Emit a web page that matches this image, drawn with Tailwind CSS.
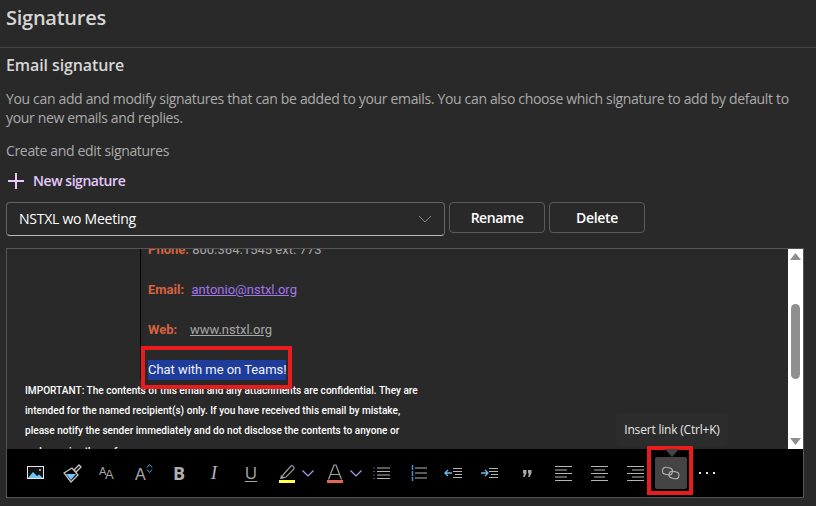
<!DOCTYPE html>
<html lang="en">
<head>
    <meta charset="UTF-8">
    <title>Signatures</title>
    <script src="https://cdn.jsdelivr.net/npm/@tailwindcss/browser@4"></script>
</head>
<body class="bg-[#292929] w-[816px] h-[506px] overflow-hidden font-['Open_Sans','Noto_Sans',sans-serif] relative">

    <!-- Header -->
    <div class="h-[48px] border-b border-[#444] pl-[6px] pt-[3px]">
        <h1 class="text-[20px] leading-[30px] font-semibold text-[#d6d6d6] tracking-[-0.25px]">Signatures</h1>
    </div>

    <div class="px-[6px]">
        <h2 class="mt-[6px] text-[16px] leading-[22px] font-semibold text-[#d6d6d6] tracking-[-0.1px]">Email signature</h2>
        <p class="mt-[13px] w-[800px] text-[14px] leading-[19px] text-[#ababab] tracking-[-0.34px]">You can add and modify signatures that can be added to your emails. You can also choose which signature to add by default to your new emails and replies.</p>
        <p class="mt-[14px] text-[14px] leading-[19px] text-[#ababab] tracking-[-0.34px]">Create and edit signatures</p>

        <!-- New signature -->
        <div class="mt-[11px] h-[20px] flex items-center gap-[9px] pl-[2px]">
            <svg width="16" height="16" viewBox="0 0 16 16"><path d="M8 0v16M0 8h16" stroke="#e9c8fb" stroke-width="2"/></svg>
            <span class="-mt-[1px] text-[14px] font-semibold text-[#e3c9fb] tracking-[-0.45px]">New signature</span>
        </div>

        <!-- Signature picker -->
        <div class="mt-[11px] flex items-start gap-[4px]">
            <div class="w-[439px] h-[34px] rounded-[4px] border border-[#666] border-b-[#bbb] flex items-center justify-between pl-[12px] pr-[12px]">
                <span class="-mt-[1px] text-[14px] text-white tracking-[-0.25px]">NSTXL wo Meeting</span>
                <svg width="14" height="8" viewBox="0 0 14 8"><path d="M1 1l6 6 6-6" stroke="#8a8a8a" fill="none"/></svg>
            </div>
            <button class="w-[96px] h-[31px] rounded-[4px] border border-[#5a5a5a] text-[14px] font-semibold text-white tracking-[-0.45px]">Rename</button>
            <button class="w-[96px] h-[31px] rounded-[4px] border border-[#5a5a5a] text-[14px] font-semibold text-white tracking-[-0.3px]">Delete</button>
        </div>

        <!-- Editor -->
        <div class="mt-[12px] w-[798px] h-[250px] border border-[#555] flex flex-col">
            <div class="h-[200px] flex overflow-hidden">
                <div class="flex-1 overflow-hidden font-['Roboto',sans-serif]">
                    <div class="h-[131px] ml-[133px] border-l border-black overflow-hidden pl-[7px] text-[13px] leading-[40px] text-[#a8a8a8]">
                        <div class="-mt-[19px]"><b class="text-[#d9623f]">Phone:</b> 800.364.1545 ext. 773</div>
                        <div><b class="text-[#d9623f]">Email:</b> &nbsp;<span class="ml-[1px] underline text-[#a374f0]">antonio@nstxl.org</span></div>
                        <div><b class="text-[#d9623f]">Web:</b> &nbsp;&nbsp;<span class="ml-[3px] underline">www.nstxl.org</span></div>
                        <div class="h-[20px] mt-[10px] w-[138px] bg-[#1e3c9c] text-[#f2f2f2] leading-[20px] tracking-[-0.04px] whitespace-nowrap">Chat with me on Teams!</div>
                    </div>
                    <div class="pt-[1px] pl-[18px] text-[10.1px] leading-[20px] font-medium text-white whitespace-nowrap">
                        <div>IMPORTANT: The contents of this email and any attachments are confidential. They are</div>
                        <div>intended for the named recipient(s) only. If you have received this email by mistake,</div>
                        <div>please notify the sender immediately and do not disclose the contents to anyone or</div>
                        <div class="mt-[1px]">make copies thereof.</div>
                    </div>
                </div>
                <!-- Scrollbar -->
                <div class="w-[15px] bg-white flex flex-col items-center">
                    <svg class="mt-[4px]" width="11" height="8" viewBox="0 0 11 8"><path d="M5.500 0l5.500 7H0z" fill="#8f8f8f"/></svg>
                    <div class="mt-[43px] w-[9px] h-[75px] rounded-[5px] bg-[#8f8f8f]"></div>
                    <svg class="mt-[58px]" width="11" height="8" viewBox="0 0 11 8"><path d="M0 1h11L5.500 8z" fill="#8f8f8f"/></svg>
                </div>
            </div>

            <!-- Toolbar -->
            <div class="h-[48px] bg-black flex items-center pl-[18px]">
                <svg width="20" height="20" viewBox="0 0 20 20"><rect x="2.500" y="3.500" width="16" height="12" fill="#111" stroke="#e6e6e6"/><path d="M3 15l5-6 4 4 2-1.500 4 3.500z" fill="#72c6f5"/><circle cx="15" cy="7" r="1" fill="#ccc"/></svg>
                <svg class="ml-[17px]" width="20" height="20" viewBox="0 0 20 20"><path d="M14 9l-2-2 5-5 2 2zM2 10l8-5 6 7-7 7z" fill="none" stroke="#c8c8c8" stroke-width="1.300"/><path d="M4 11h10l-5 6z" fill="#72c6f5"/></svg>
                <svg class="ml-[15px]" width="20" height="20" viewBox="0 0 20 20"><text x="2" y="12" font-family="Liberation Sans" font-size="11" fill="#a8a8a8">A</text><text x="8" y="16" font-family="Liberation Sans" font-size="13" fill="#a8a8a8">A</text></svg>
                <svg class="ml-[18px]" width="20" height="20" viewBox="0 0 20 20"><text x="0" y="17" font-family="Liberation Sans" font-size="16" fill="#a8a8a8">A</text><path d="M12 5l2.500-3L17 5M12 7l2.500 3L17 7" transform="translate(0 -.5)" stroke="#4fa6dc" fill="none"/></svg>
                <span class="ml-[14px] w-[20px] text-center text-[18px] leading-[20px] font-bold text-[#b0b0b0] font-['Open_Sans',sans-serif]">B</span>
                <span class="ml-[15px] w-[20px] text-center text-[19px] leading-[20px] italic text-[#b0b0b0] font-['Liberation_Serif',serif]">I</span>
                <span class="ml-[17px] w-[20px] text-center text-[17px] leading-[18px] underline underline-offset-2 text-[#a8a8a8] font-['Open_Sans',sans-serif]">U</span>
                <svg class="ml-[15px]" width="20" height="20" viewBox="0 0 20 20"><path d="M7 12l8-9c1-1 4 1 3 3l-8 8-4 1z" fill="none" stroke="#9a9a9a" stroke-width="1.200"/><path d="M5 12l4 3-5 1z" fill="#9a9a9a"/><rect x="3" y="17" width="16" height="3" fill="#ffff4d"/></svg>
                <svg class="ml-[6px]" width="12" height="8" viewBox="0 0 12 8"><path d="M.5 1.500l5.500 5.500 5.500-5.500" stroke="#b39cf0" fill="none" stroke-width="1.200"/></svg>
                <svg class="ml-[11px]" width="20" height="20" viewBox="0 0 20 20"><path d="M3.500 16.500L9 2h2l5.500 14.500M5.500 11.500h9" stroke="#a0a0a0" fill="none" stroke-width="1.200"/><rect x="2" y="17" width="16" height="3" fill="#e0655a"/></svg>
                <svg class="ml-[5px]" width="12" height="8" viewBox="0 0 12 8"><path d="M.5 1.500l5.500 5.500 5.500-5.500" stroke="#b39cf0" fill="none" stroke-width="1.200"/></svg>
                <svg class="ml-[10px]" width="20" height="20" viewBox="0 0 20 20"><path d="M5 5h13M5 8.500h13M5 12h13M5 15.500h13" stroke="#b5b5b5"/><path d="M2 4.500v1M2 8v1M2 11.500v1M2 15v1" stroke="#5cb0e6"/></svg>
                <svg class="ml-[16px]" width="20" height="20" viewBox="0 0 20 20"><path d="M7 5h12M7 10h12M7 15h12" stroke="#b5b5b5"/><path d="M4.500 2v16" stroke="#3f92cf" stroke-width="1.500" stroke-dasharray="5 1"/></svg>
                <svg class="ml-[16px]" width="20" height="20" viewBox="0 0 20 20"><path d="M9 5h9M9 8h9M11 11h7M9 14h9" stroke="#b5b5b5" transform="translate(0 .5)"/><path d="M8 10H1M4 7l-3 3 3 3" stroke="#66bdf0" fill="none" stroke-width="1.300"/></svg>
                <svg class="ml-[16px]" width="20" height="20" viewBox="0 0 20 20"><path d="M9 5h9M9 8h9M11 11h7M9 14h9" stroke="#b5b5b5" transform="translate(0 .5)"/><path d="M1 10h7M5 7l3 3-3 3" stroke="#66bdf0" fill="none" stroke-width="1.300"/></svg>
                <svg class="ml-[16px]" width="20" height="20" viewBox="0 0 20 20"><path d="M7 7h3.500v3.500L8.500 14H7l1-3.500H7zM12 7h3.500v3.500L13.500 14H12l1-3.500h-1z" fill="#a8a8a8"/></svg>
                <svg class="ml-[17px]" width="20" height="20" viewBox="0 0 20 20"><path d="M2 3.500h17M2 7h12M2 10.500h17M2 14h12M2 17.500h17" stroke="#b5b5b5"/></svg>
                <svg class="ml-[16px]" width="20" height="20" viewBox="0 0 20 20"><path d="M2 3.500h17M5 7h11M2 10.500h17M5 14h11M2 17.500h17" stroke="#b5b5b5"/></svg>
                <svg class="ml-[16px]" width="20" height="20" viewBox="0 0 20 20"><path d="M2 3.500h17M7 7h12M2 10.500h17M7 14h12M2 17.500h17" stroke="#b5b5b5"/></svg>
                <div class="ml-[10px] w-[32px] h-[32px] rounded-[2px] bg-[#444] flex items-center justify-center">
                    <svg width="20" height="16" viewBox="0 0 20 16"><g fill="none" stroke="#b8b8b8"><rect x="1.500" y="2.500" width="10" height="7" rx="3.500" transform="rotate(12 6 6)"/><rect x="8" y="6.500" width="10" height="7" rx="3.500" transform="rotate(12 13 10)"/></g></svg>
                </div>
                <svg class="ml-[10px]" width="20" height="20" viewBox="0 0 20 20"><path d="M2 9h2v2H2zM9 9h2v2H9zM16 9h2v2h-2z" fill="#e6e6e6"/></svg>
            </div>
        </div>
    </div>

    <!-- Annotations and tooltip -->
    <div class="absolute left-[141px] top-[346px] w-[151px] h-[43px] border-[4px] border-[#e81c1c]"></div>
    <div class="absolute left-[616px] top-[413px] w-[112px] h-[33px] rounded-[4px] bg-[#2c2c2c] flex items-center justify-center text-[12px] text-[#e6e6e6] tracking-[-0.2px] whitespace-nowrap">Insert link (Ctrl+K)</div>
    <div class="absolute left-[647px] top-[446px] w-[46px] h-[49px] border-[4px] border-[#e81c1c]"></div>
    <svg class="absolute left-[665px] top-[449px]" width="14" height="8" viewBox="0 0 14 8"><path d="M0 0h14L7 8z" fill="#444"/></svg>
</body>
</html>
